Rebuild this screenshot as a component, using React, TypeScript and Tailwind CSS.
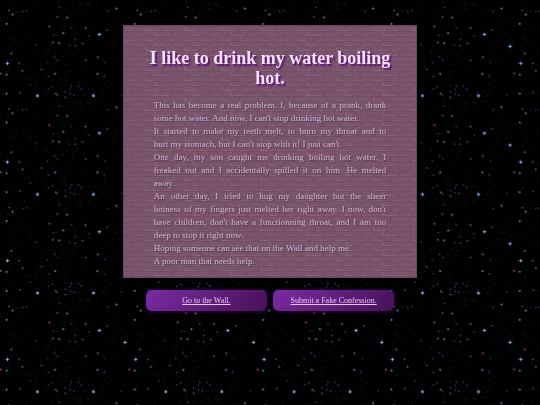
import React from 'react';

type Star = [number, number];

// coordinates are in thirds of a pixel, one tile is 385 x 296
const BRIGHT: Star[] = [[112, 287], [280, 287], [22, 190], [298, 103], [375, 139]];
const BLUE: Star[] = [[189, 99], [37, 43], [201, 52], [165, 221], [292, 221], [19, 223], [177, 129], [349, 25], [19, 71], [19, 280]];
const RED: Star[] = [[148, 79], [256, 83], [158, 127], [34, 160], [67, 212], [2, 220], [167, 281], [293, 171]];
const WHITE: Star[] = [[257, 181], [124, 208], [172, 51], [27, 31], [247, 130], [226, 137], [322, 90], [60, 278], [196, 292], [58, 190]];
const DIM: Star[] = [
  [178, 22], [68, 34], [80, 32], [325, 34], [142, 187], [163, 171], [316, 187], [146, 229], [313, 229], [91, 254],
  [145, 267], [157, 261], [235, 259], [245, 267], [210, 268], [196, 276], [172, 285], [226, 118], [267, 109],
  [208, 136], [160, 106], [214, 83], [222, 285], [109, 134], [173, 181], [211, 282], [365, 285], [214, 259],
];

const dust = Array.from({ length: 330 }, (_, i) => {
  const a = Math.abs(Math.sin(i * 12.9898) * 43758.5453) % 1;
  const b = Math.abs(Math.sin(i * 78.233) * 24634.6345) % 1;
  return { x: a * 382, y: b * 293, o: 0.08 + ((i * 7) % 10) / 50 };
});

const brickRows = Array.from({ length: 12 }, (_, row) => ({
  y: row * 5,
  joints: [0, 1, 2, 3].map(col => (col * 19 + (row % 2) * 9 + ((row * 5 + col * 3) % 5)) % 76),
}));

const StarField: React.FC = () => (
  <svg className="fixed inset-0 -z-10 h-full w-full bg-black" aria-hidden="true">
    <defs>
      <pattern id="stars" width="385" height="296" patternUnits="userSpaceOnUse" patternTransform="scale(0.33333)">
        {dust.map((d, i) => (
          <rect key={i} x={d.x} y={d.y} width="3" height="3" fill={i % 3 ? '#8b8b95' : '#8a7462'} opacity={d.o} />
        ))}
        {DIM.map(([x, y]) => <rect key={`${x}-${y}`} x={x - 2} y={y - 2} width="4" height="4" fill="#444488" />)}
        {WHITE.map(([x, y]) => <rect key={`${x}-${y}`} x={x - 2} y={y - 2} width="4" height="4" fill="#6c6c72" />)}
        {RED.map(([x, y]) => <rect key={`${x}-${y}`} x={x - 2} y={y - 2} width="5" height="5" fill="#9c4668" />)}
        {BLUE.map(([x, y]) => <rect key={`${x}-${y}`} x={x - 2} y={y - 2} width="5" height="5" fill="#7088c4" />)}
        {BRIGHT.map(([x, y]) => (
          <g key={`${x}-${y}`}>
            <path d={`M${x - 6} ${y}h12M${x} ${y - 6}v12`} stroke="#4a62a0" strokeWidth="3" />
            <rect x={x - 2} y={y - 2} width="5" height="5" fill="#b4d2ff" />
          </g>
        ))}
      </pattern>
    </defs>
    <rect width="100%" height="100%" fill="url(#stars)" />
  </svg>
);

const Bricks: React.FC = () => (
  <svg className="absolute inset-0 -z-10 h-full w-full" aria-hidden="true">
    <defs>
      <pattern id="bricks" width="76" height="60" patternUnits="userSpaceOnUse">
        <rect width="76" height="60" fill="#775068" />
        {brickRows.map(({ y, joints }, row) => (
          <g key={row}>
            <path d={`M0 ${y + 0.5}H76`} stroke="#6a445f" opacity="0.6" />
            {joints.map((x, i) => (
              <g key={i}>
                <path d={`M${x} ${y + 4.5}h${8 + ((row + i * 2) % 4) * 2}`} stroke="#8c687f" opacity={i % 2 ? 0.65 : 0.35} />
                <path d={`M${x + 0.5} ${y + 1}l-1 4`} stroke={i % 2 ? '#8b657d' : '#67425c'} fill="none" opacity="0.7" />
              </g>
            ))}
          </g>
        ))}
      </pattern>
      <filter id="grain">
        <feTurbulence type="fractalNoise" baseFrequency="0.35" numOctaves="2" seed="4" />
        <feColorMatrix type="saturate" values="0" />
      </filter>
    </defs>
    <rect width="100%" height="100%" fill="url(#bricks)" />
    <rect width="100%" height="100%" filter="url(#grain)" opacity="0.08" />
  </svg>
);

const PARAGRAPHS = [
  ['This has become a real problem. I, because of a prank, drank', "some hot water. And now, I can't stop drinking hot water."],
  ['It started to make my teeth melt, to burn my throat and to', "hurt my stomach, but I can't stop with it! I just can't."],
  ['One day, my son caught me drinking boiling hot water. I', 'freaked out and I accidentally spilled it on him. He melted', 'away.'],
  [
    'An other day, I tried to hug my daughter but the sheer',
    "hotness of my fingers just melted her right away. I now, don't",
    "have children, don't have a functionning throat, and I am too",
    'deep to stop it right now.',
  ],
  ['Hoping someone can see that on the Wall and help me.'],
  ['A poor man that needs help.'],
];

const LINKS = [
  { label: 'Go to the Wall.', href: '#wall' },
  { label: 'Submit a Fake Confession.', href: '#submit' },
];

const App: React.FC = () => {
  return (
    <main className="relative isolate min-h-screen pt-[25px] font-['Liberation_Serif',serif]">
      <StarField />
      <article className="relative isolate mx-auto w-[54.5%] border border-[#6a4660] px-5 pt-[22px] pb-[9px]">
        <Bricks />
        <h1 className="text-center text-[18px] leading-5 font-bold text-[#f9e4ff] [text-shadow:1px_1px_0_#6a2080,2px_2px_1px_#5d1c74]">
          I like to drink my water boiling hot.
        </h1>
        <div className="mt-[11px] px-[10px] text-[9px] leading-[13px] text-[#cdb7cf] [text-shadow:1px_1px_1px_#573350]">
          {PARAGRAPHS.map(lines => (
            <p key={lines[0]}>
              {lines.map((line, i) => (
                <span key={i} className={i < lines.length - 1 ? 'block text-justify [text-align-last:justify]' : 'block'}>
                  {line}{' '}
                </span>
              ))}
            </p>
          ))}
        </div>
      </article>
      <nav className="mx-auto mt-3 flex w-[46%] gap-1.5">
        {LINKS.map(link => (
          <a
            key={link.href}
            href={link.href}
            className="flex h-[21px] flex-1 items-center justify-center rounded-md bg-[linear-gradient(135deg,#7a2ba3,#461158)] text-[8px] text-[#e6c8ef] underline shadow-[0_0_4px_#3a1150]"
          >
            {link.label}
          </a>
        ))}
      </nav>
    </main>
  );
};

export default App;
